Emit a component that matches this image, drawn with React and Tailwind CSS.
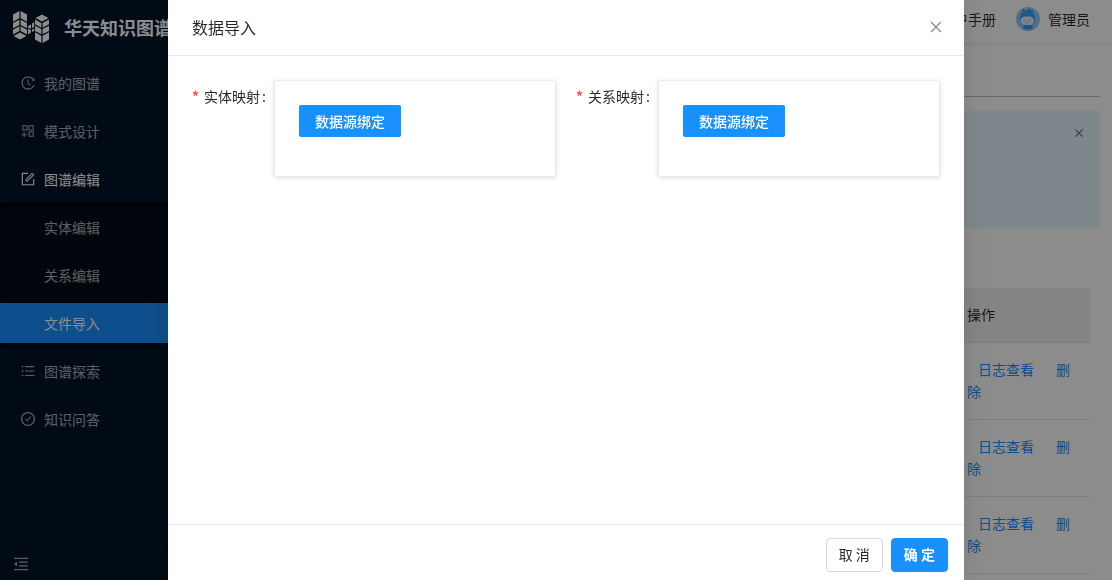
import React, { useState } from 'react';
import {
  AiOutlineHistory,
  AiOutlineAppstoreAdd,
  AiOutlineForm,
  AiOutlineUnorderedList,
  AiOutlineCheckCircle,
  AiOutlineMenuFold,
  AiOutlineClose,
} from 'react-icons/ai';

const menu = [
  { label: '我的图谱', icon: AiOutlineHistory },
  { label: '模式设计', icon: AiOutlineAppstoreAdd },
  { label: '图谱编辑', icon: AiOutlineForm, open: true, children: ['实体编辑', '关系编辑', '文件导入'] },
  { label: '图谱探索', icon: AiOutlineUnorderedList },
  { label: '知识问答', icon: AiOutlineCheckCircle },
];

const rows = [1, 2, 3];

// One column of the logo: a diamond on top of three folded strips
const column =
  'M0.500 3.500 7 0 13.500 3.500 7 7Z ' +
  'M0 5 6.400 8.400V13.200L0 9.800Z M0 11.200 6.400 14.600V19.800L0 16.400Z M0 17.800 6.400 21.200V28.500L0 25Z ' +
  'M14 5 7.600 8.400V13.200L14 9.800Z M14 11.200 7.600 14.600V19.800L14 16.400Z M14 17.800 7.600 21.200V28.500L14 25Z';

const Logo = () => (
  <svg viewBox="0 0 36 32" className="h-8 w-9 shrink-0" fill="#fff" aria-hidden="true">
    <path d={column} transform="translate(14 28.500) rotate(180)" />
    <path d="M15 15 18 13.200V18L15 16.400Z M19 12.600 21.200 11V15.800L19 17.200Z M15 17.600 18 19.200V21.600L15 23.400Z M19 18.600 21.200 17.400V19.800L19 21Z" />
    <path d={column} transform="translate(22 3.500)" />
  </svg>
);

const Avatar = () => (
  <svg viewBox="0 0 24 24" className="size-6" aria-hidden="true">
    <circle cx="12" cy="12" r="12" fill="#93ccf8" />
    <path d="M6.500 21Q8 17 12 17T17 21Q12 24 6.500 21Z" fill="#4d8fdc" />
    <path d="M11 5Q8 4.500 6.500 2.500M11 5Q12 3 14 2.500M12 5Q15 4.500 17 3.500" fill="none" stroke="#3a7fd0" strokeWidth="1.500" />
    <circle cx="11.500" cy="11.500" r="8" fill="#35a0f5" />
    <rect x="4.500" y="9.500" width="13.500" height="8.500" rx="4.200" fill="#e4eefa" />
    <path d="M7.500 13.500h1.500M13 13.500h1.500M10.500 15.500h1.500" stroke="#7799cc" strokeWidth="1" />
  </svg>
);

const Sidebar = () => (
  <aside className="flex w-[200px] shrink-0 flex-col bg-[#001529] text-sm text-white/65">
    <div className="flex h-[59px] items-center gap-[15px] pb-1.5 pl-[13px] text-white">
      <Logo />
      <h1 className="text-lg font-bold whitespace-nowrap">华天知识图谱</h1>
    </div>
    <nav className="flex flex-1 flex-col">
      {menu.map(({ label, icon: Icon, open, children }) => (
        <div key={label}>
          <a href="#" className={`my-1 flex h-10 items-center gap-2 pb-px pl-5 ${open ? 'text-white' : ''}`}>
            <Icon className="size-4" />
            {label}
          </a>
          {children && (
            <div className="flex flex-col bg-[#000c17] shadow-[inset_0_2px_8px_rgba(0,0,0,0.45)]">
              {children.map((child) => (
                <a
                  key={child}
                  href="#"
                  className={`my-1 flex h-10 items-center pb-px pl-11 ${child === '文件导入' ? 'bg-[#1890ff] text-white' : ''}`}
                >
                  {child}
                </a>
              ))}
            </div>
          )}
        </div>
      ))}
    </nav>
    <button type="button" aria-label="收起菜单" className="flex h-9 items-center border-t border-black/20 pt-0.5 pl-3">
      <AiOutlineMenuFold className="size-[18px]" />
    </button>
  </aside>
);

const Page = () => (
  <div className="flex min-w-0 flex-1 flex-col bg-white">
    <header className="flex h-[43px] shrink-0 items-center justify-end gap-5 pr-[22px] pb-1.5 shadow-[0_1px_4px_rgba(0,21,41,0.12)]">
      <a href="#">用户手册</a>
      <div className="flex items-center gap-2">
        <Avatar />
        <span>管理员</span>
      </div>
    </header>
    <main className="flex flex-1 flex-col px-3">
      <div className="h-[54px] shrink-0 border-b border-[#bfbfbf]" />
      <section className="mt-3.5 flex h-[117px] shrink-0 items-start justify-end bg-[#e6f7ff] px-[15px] py-4">
        <button type="button" aria-label="关闭提示" className="text-black/60">
          <AiOutlineClose className="size-3" />
        </button>
      </section>
      <div className="mt-15 pr-2.5">
        <table className="w-full table-fixed text-left leading-[22px]">
          <thead>
            <tr className="border-b border-[#e8e8e8] bg-[#f2f2f2]">
              <td />
              <th className="w-[139px] px-4 pt-[15px] pb-[17px] font-normal">操作</th>
            </tr>
          </thead>
          <tbody>
            {rows.map((row) => (
              <tr key={row} className="border-b border-[#e8e8e8]">
                <td />
                <td className="px-4 pt-[15px] pb-[17px] text-[#1890ff]">
                  <a href="#" className="mx-[11px]">日志查看</a>
                  <a href="#" className="ml-[11px]">删除</a>
                </td>
              </tr>
            ))}
          </tbody>
        </table>
      </div>
    </main>
  </div>
);

const MappingField = ({ id, label }) => (
  <div className="flex flex-1 items-start">
    <label htmlFor={id} className="flex h-8 w-[82px] shrink-0 items-center pb-px whitespace-nowrap">
      <span className="mr-1 w-2 font-bold text-[#ff4d4f]">*</span>
      {label}
      <span className="ml-0.5">:</span>
    </label>
    <div className="min-h-[97px] flex-1 rounded-xs border border-[#ececec] p-6 shadow-[0_1px_4px_rgba(0,0,0,0.15)]">
      <button id={id} type="button" className="h-8 rounded-xs bg-[#1890ff] px-4 pb-px font-medium text-white">
        数据源绑定
      </button>
    </div>
  </div>
);

const ImportDrawer = ({ onClose }) => (
  <div className="fixed inset-0 z-10 flex bg-black/45 pr-[148px] pl-[168px]">
    <div role="dialog" aria-label="数据导入" className="flex flex-1 flex-col bg-white shadow-[0_0_28px_rgba(0,0,0,0.12)]">
      <div className="flex h-14 shrink-0 items-center justify-between border-b border-[#e8e8e8] pr-5 pb-0.5 pl-6">
        <h2 className="text-base text-black/85">数据导入</h2>
        <button type="button" aria-label="关闭" onClick={onClose} className="text-black/45">
          <AiOutlineClose className="size-4" />
        </button>
      </div>
      <form className="flex flex-1 items-start gap-5 p-6">
        <MappingField id="entity-mapping" label="实体映射" />
        <MappingField id="relation-mapping" label="关系映射" />
      </form>
      <div className="flex h-14 shrink-0 items-center justify-end gap-2 border-t border-[#e8e8e8] px-4 pt-1">
        <button type="button" onClick={onClose} className="h-[34px] rounded border border-[#d9d9d9] px-3 pb-px">
          取 消
        </button>
        <button type="button" onClick={onClose} className="h-[34px] rounded border border-[#1890ff] bg-[#1890ff] px-3 pb-px font-bold text-white">
          确 定
        </button>
      </div>
    </div>
  </div>
);

const App = () => {
  const [open, setOpen] = useState(true);

  return (
    <div className="flex h-screen overflow-hidden font-['Noto_Sans_CJK_SC',sans-serif] text-sm text-black/85">
      <Sidebar />
      <Page />
      {open && <ImportDrawer onClose={() => setOpen(false)} />}
    </div>
  );
};

export default App;
